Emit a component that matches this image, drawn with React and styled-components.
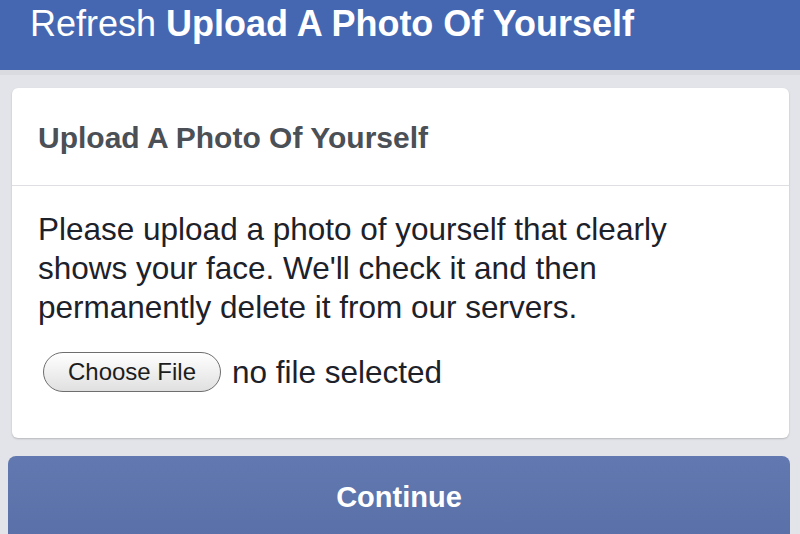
import React from "react";
import styled, { createGlobalStyle } from "styled-components";

const Global = createGlobalStyle`
  html, body {
    margin: 0;
    padding: 0;
    background: #e3e4e9;
    font-family: "Liberation Sans", Arial, sans-serif;
    overflow: hidden;
  }
`;

function App() {
  return (
    <>
      <Global />
      <Page>
        <TopBar>
          <TopTitle>
            Refresh <strong>Upload A Photo Of Yourself</strong>
          </TopTitle>
        </TopBar>
        <Content>
          <Card>
            <CardHead>Upload A Photo Of Yourself</CardHead>
            <CardBody>
              <Message>
                Please upload a photo of yourself that clearly
                <br />
                shows your face. We'll check it and then
                <br />
                permanently delete it from our servers.
              </Message>
              <FileRow>
                <ChooseButton>Choose File</ChooseButton>
                <FileStatus>no file selected</FileStatus>
              </FileRow>
            </CardBody>
          </Card>
          <ContinueButton>Continue</ContinueButton>
        </Content>
      </Page>
    </>
  );
}

export default App;

const Page = styled.div`
  width: 800px;
  height: 534px;
  overflow: hidden;
  background: #e3e4e9;
`;

const TopBar = styled.div`
  height: 70px;
  background: #4567b2;
  border-bottom: 5px solid #d9dbe0;
  padding-left: 30px;
`;

const TopTitle = styled.h1`
  margin: 0;
  padding-top: 4px;
  color: #ffffff;
  font-size: 36px;
  font-weight: 400;
  letter-spacing: 0;
  line-height: 40px;
  strong {
    font-weight: 700;
  }
`;

const Content = styled.div`
  padding: 13px 11px 0 12px;
  display: flex;
  flex-direction: column;
  gap: 18px;
`;

const Card = styled.div`
  background: #ffffff;
  border-radius: 6px;
  box-shadow: 0 1px 2px rgba(0, 0, 0, 0.2);
`;

const CardHead = styled.div`
  height: 98px;
  box-sizing: border-box;
  padding: 2px 26px 0;
  display: flex;
  align-items: center;
  border-bottom: 1px solid #dddfe3;
  color: #4b4f56;
  font-size: 30px;
  font-weight: 700;
`;

const CardBody = styled.div`
  padding: 24px 26px 46px;
`;

const Message = styled.p`
  margin: 0;
  color: #1d2129;
  font-size: 31.5px;
  line-height: 39px;
`;

const FileRow = styled.div`
  display: flex;
  align-items: center;
  gap: 11px;
  margin-top: 25px;
  padding-left: 5px;
`;

const ChooseButton = styled.button`
  width: 178px;
  height: 40px;
  border-radius: 20px;
  border: 1.5px solid #6e6e6e;
  background: linear-gradient(#ffffff, #e0e0e0);
  color: #1d1d1d;
  font-family: "Liberation Sans", Arial, sans-serif;
  font-size: 24px;
  padding: 0;
`;

const FileStatus = styled.span`
  color: #1d2129;
  font-size: 31.5px;
`;

const ContinueButton = styled.button`
  height: 110px;
  margin: 0 -1px 0 -4px;
  border: none;
  border-radius: 8px;
  background: linear-gradient(#6179b0, #5a70a8 80px);
  color: #ffffff;
  font-family: "Liberation Sans", Arial, sans-serif;
  font-size: 29px;
  font-weight: 700;
  line-height: 82px;
  padding: 0;
  display: flex;
  align-items: flex-start;
  justify-content: center;
`;
